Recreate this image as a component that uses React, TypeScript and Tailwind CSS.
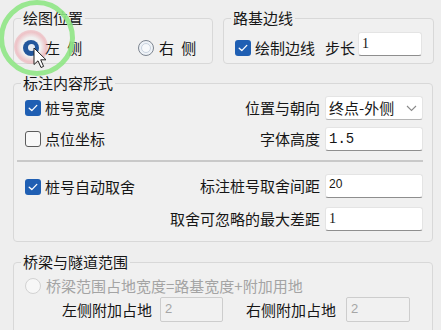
import React from "react";

function CheckBox({ checked }: { checked: boolean }) {
  if (checked) {
    return (
      <span className="flex h-[16px] w-[16px] shrink-0 items-center justify-center rounded-[3px] bg-[#1f5fb3]">
        <svg width="10" height="8" viewBox="0 0 10 8">
          <path d="M1.2 4.2 L3.8 6.6 L8.8 1.4" fill="none" stroke="white" strokeWidth="1.3" strokeLinecap="round" strokeLinejoin="round" />
        </svg>
      </span>
    );
  }
  return <span className="h-[16px] w-[16px] shrink-0 rounded-[3px] border border-[#5c5c5c] bg-[#f8f8f8]" />;
}

function Radio({ state }: { state: "on" | "off" | "disabled" }) {
  if (state === "on") {
    return (
      <span className="flex h-[16px] w-[16px] shrink-0 items-center justify-center rounded-full bg-[#22569c]">
        <span className="h-[7px] w-[7px] rounded-full bg-[#e8ecf2]" />
      </span>
    );
  }
  if (state === "off") {
    return (
      <span className="flex h-[16px] w-[16px] shrink-0 items-center justify-center rounded-full border border-[#7d8590] bg-[#eef2f7]">
        <span className="h-[10px] w-[10px] rounded-full border border-[#c9d3df] bg-[#f7f9fb]" />
      </span>
    );
  }
  return <span className="h-[16px] w-[16px] shrink-0 rounded-full border border-[#d2d2d2] bg-[#f7f7f7]" />;
}

function Input({ value, w, valueClass }: { value: string; w: string; valueClass: string }) {
  return (
    <div className={`flex h-[24px] ${w} items-start rounded-[3px] border border-[#e4e4e4] border-b-[#8e8e8e] bg-white pl-[3px] pt-[3px]`}>
      <span className={valueClass}>{value}</span>
    </div>
  );
}

function DisabledInput({ value, w }: { value: string; w: string }) {
  return (
    <div className={`h-[25px] ${w} rounded-[2px] border border-[#cdcdcd] bg-[#f1f1f1] pl-[4px] pt-[3px] font-['Liberation_Sans',sans-serif] text-[13px] leading-[15px] text-[#a6a6a6]`}>
      {value}
    </div>
  );
}

export default function App() {
  return (
    <div className="relative h-[330px] w-[441px] overflow-hidden whitespace-nowrap bg-[#eeeeee] font-['Noto_Sans_CJK_SC',sans-serif] text-[15px] leading-[16px] text-[#161616]">
      <div className="flex flex-col pl-[13px] pt-[10px]">
        {/* row 1 */}
        <div className="flex gap-[10px]">
          <fieldset className="h-[54px] w-[200px] shrink-0 rounded-[4px] border border-[#d8d8d8] bg-[#f0f0f0] px-[9px]">
            <legend className="ml-[-2px] px-[2px]">绘图位置</legend>
            <div className="flex h-[37px] items-center pt-[6px]">
              <div className="flex w-[115px] shrink-0 items-center">
                <Radio state="on" />
                <span className="ml-[6px] [word-spacing:4px]">左 侧</span>
              </div>
              <div className="flex shrink-0 items-center">
                <Radio state="off" />
                <span className="ml-[5px] [word-spacing:4px]">右 侧</span>
              </div>
            </div>
          </fieldset>
          <fieldset className="h-[54px] w-[210px] shrink-0 rounded-[4px] border border-[#d8d8d8] bg-[#f0f0f0] px-[11px]">
            <legend className="ml-[-4px] px-[2px]">路基边线</legend>
            <div className="flex h-[37px] items-center pt-[6px]">
              <CheckBox checked />
              <span className="ml-[4px] shrink-0">绘制边线</span>
              <span className="ml-[10px] shrink-0">步长</span>
              <div className="ml-[3px] shrink-0 self-start">
                <Input value="1" w="w-[64px]" valueClass="font-['Liberation_Serif',serif] text-[14px] leading-[15px]" />
              </div>
            </div>
          </fieldset>
        </div>

        {/* group 3 */}
        <fieldset className="mt-[11px] w-[420px] rounded-[4px] border border-[#d8d8d8] bg-[#f0f0f0] pb-[10px] pl-[11px] pr-[9px]">
          <legend className="ml-[-4px] px-[2px]">标注内容形式</legend>
          <div className="mt-[5px] flex h-[24px] items-center justify-between">
            <div className="flex items-center">
              <CheckBox checked />
              <span className="ml-[4px]">桩号宽度</span>
            </div>
            <div className="flex items-center">
              <span>位置与朝向</span>
              <div className="ml-[5px] flex h-[24px] w-[98px] items-center justify-between rounded-[3px] border border-[#e4e4e4] border-b-[#b5b5b5] bg-white pl-[3px] pr-[5px]">
                <span>终点-外侧</span>
                <svg width="11" height="7" viewBox="0 0 11 7">
                  <path d="M1 1 L5.5 5.5 L10 1" fill="none" stroke="#8a8a8a" strokeWidth="1.1" />
                </svg>
              </div>
            </div>
          </div>
          <div className="mt-[7px] flex h-[24px] items-center justify-between">
            <div className="flex items-center">
              <CheckBox checked={false} />
              <span className="ml-[4px]">点位坐标</span>
            </div>
            <div className="flex items-center">
              <span>字体高度</span>
              <div className="ml-[5px]">
                <Input value="1.5" w="w-[98px]" valueClass="font-['Liberation_Mono',monospace] text-[14px] leading-[16px]" />
              </div>
            </div>
          </div>
          <div className="ml-[-8px] mt-[9px] h-[2px] bg-[#c9c9c9]" />
          <div className="mt-[11px] flex h-[25px] items-center justify-between">
            <div className="flex items-center pt-[3px]">
              <CheckBox checked />
              <span className="ml-[4px]">桩号自动取舍</span>
            </div>
            <div className="flex items-center">
              <span>标注桩号取舍间距</span>
              <div className="ml-[5px]">
                <Input value="20" w="w-[98px]" valueClass="font-['Liberation_Sans',sans-serif] text-[12px] leading-[13px]" />
              </div>
            </div>
          </div>
          <div className="mt-[9px] flex h-[24px] items-center justify-end">
            <span>取舍可忽略的最大差距</span>
            <div className="ml-[5px]">
              <Input value="1" w="w-[98px]" valueClass="font-['Liberation_Serif',serif] text-[14px] leading-[15px]" />
            </div>
          </div>
        </fieldset>

        {/* group 4 */}
        <fieldset className="mt-[12px] h-[100px] w-[420px] rounded-[4px] border border-[#d8d8d8] bg-[#f0f0f0] px-[11px]">
          <legend className="ml-[-4px] px-[2px]">桥梁与隧道范围</legend>
          <div className="mt-[8px] flex h-[16px] items-center">
            <Radio state="disabled" />
            <span className="ml-[5px] text-[#a4a4a4]">桥梁范围占地宽度=路基宽度+附加用地</span>
          </div>
          <div className="mt-[3px] flex h-[25px] items-center pl-[37px]">
            <span>左侧附加占地</span>
            <div className="ml-[8px]">
              <DisabledInput value="2" w="w-[63px]" />
            </div>
            <span className="ml-[23px]">右侧附加占地</span>
            <div className="ml-[10px]">
              <DisabledInput value="2" w="w-[64px]" />
            </div>
          </div>
        </fieldset>
      </div>

      {/* cursor highlight overlay */}
      <div className="pointer-events-none absolute left-[-1px] top-[0px] h-[76px] w-[76px] rounded-full border-[5px] border-[#8fe585] opacity-90" />
      <div className="pointer-events-none absolute left-[14px] top-[30px] h-[34px] w-[34px] rounded-full bg-[radial-gradient(circle,rgba(235,140,150,0)_40%,rgba(235,140,150,0.45)_62%,rgba(235,140,150,0)_100%)]" />
      <svg className="pointer-events-none absolute left-[33px] top-[47px]" width="16" height="23" viewBox="0 0 16 23">
        <path d="M1 1 L1 17.5 L5 13.8 L8 20.5 L10.6 19.4 L7.7 12.8 L13 12.8 Z" fill="white" stroke="#222" strokeWidth="1" strokeLinejoin="round" />
      </svg>
    </div>
  );
}
